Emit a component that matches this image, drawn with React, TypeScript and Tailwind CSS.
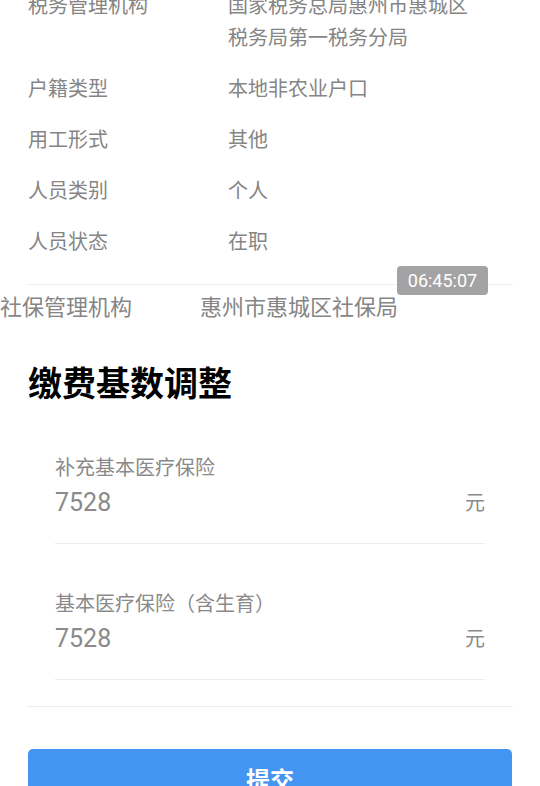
import React from 'react';

const FONT = { fontFamily: '"Roboto", "Noto Sans CJK SC", sans-serif' };

const infoRows = [
  { label: '税务管理机构', value: '国家税务总局惠州市惠城区税务局第一税务分局' },
  { label: '户籍类型', value: '本地非农业户口' },
  { label: '用工形式', value: '其他' },
  { label: '人员类别', value: '个人' },
  { label: '人员状态', value: '在职' },
];

const baseItems = [
  { label: '补充基本医疗保险', value: '7528' },
  { label: '基本医疗保险（含生育）', value: '7528' },
];

export default function App() {
  return (
    <div className="w-[540px] h-[786px] overflow-hidden bg-white relative" style={FONT}>
      {/* info rows, scrolled so the first one is cut off */}
      <div className="mt-[-10px] px-[28px] flex flex-col gap-[19px]">
        {infoRows.map((row) => (
          <div key={row.label} className="flex text-[20px] leading-[32px] text-[#858585]">
            <div className="w-[200px] shrink-0">{row.label}</div>
            <div className="w-[245px]">{row.value}</div>
          </div>
        ))}
      </div>

      <div className="mt-[26px] mx-[27px] border-t border-[#ececec]" />

      {/* 社保 row, slightly larger and shifted */}
      <div className="flex text-[22px] leading-[32px] text-[#858585] mt-[7px]">
        <div className="w-[200px] shrink-0">社保管理机构</div>
        <div>惠州市惠城区社保局</div>
      </div>

      {/* timestamp badge */}
      <div className="absolute left-[397px] top-[266px] w-[91px] h-[29px] rounded-[4px] bg-[#a3a3a3] text-white text-[18px] leading-[29px] text-center">
        06:45:07
      </div>

      <h2 className="mt-[40px] ml-[28px] text-[34px] leading-[40px] font-bold text-black">缴费基数调整</h2>

      <div className="mt-[50px] px-[55px] flex flex-col gap-[46px]">
        {baseItems.map((item) => (
          <div key={item.label} className="border-b border-[#ececec] pb-[23px]">
            <div className="text-[20px] leading-[28px] text-[#8a8a8a]">{item.label}</div>
            <div className="mt-[4px] flex items-center justify-between">
              <span className="text-[25px] leading-[34px] text-[#8a8a8a]">{item.value}</span>
              <span className="text-[20px] leading-[34px] text-[#8a8a8a]">元</span>
            </div>
          </div>
        ))}
      </div>

      <div className="mt-[26px] mx-[27px] border-t border-[#ececec]" />

      <div className="mt-[42px] mx-[28px]">
        <button className="w-full h-[64px] rounded-[5px] bg-[#4494f2] text-white text-[24px] font-bold">提交</button>
      </div>
    </div>
  );
}
